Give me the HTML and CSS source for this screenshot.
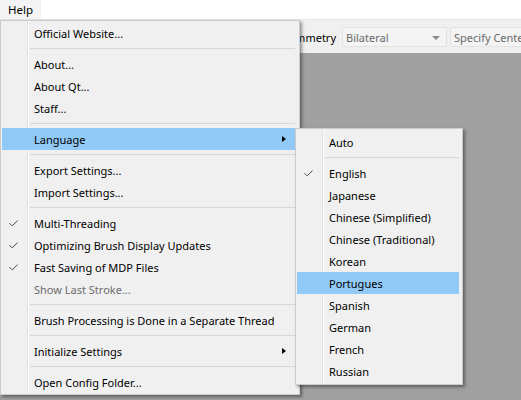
FILE: index.html
```html
<!DOCTYPE html>
<html>
<head>
<meta charset="utf-8">
<link rel="stylesheet" href="styles.css">
</head>
<body>
<div class="app">
  <div class="menubar"><span class="mb-item">Help</span></div>
  <div class="toolbar">
    <span class="tb-label">Symmetry</span>
    <div class="combo"><span>Bilateral</span><span class="combo-arrow"></span></div>
    <div class="field">Specify Center</div>
  </div>
  <div class="canvas"></div>

  <div class="menu main">
    <div class="item">Official Website...</div>
    <div class="sep"></div>
    <div class="item">About...</div>
    <div class="item">About Qt...</div>
    <div class="item">Staff...</div>
    <div class="sep"></div>
    <div class="item active">Language<span class="arrow"></span></div>
    <div class="sep"></div>
    <div class="item">Export Settings...</div>
    <div class="item">Import Settings...</div>
    <div class="sep"></div>
    <div class="item"><svg class="check" width="9" height="7" viewBox="0 0 9 7"><path d="M0.5 3.2 L3.2 5.9 L8.5 0.6" fill="none" stroke="#4a4a4a" stroke-width="1"/></svg>Multi-Threading</div>
    <div class="item"><svg class="check" width="9" height="7" viewBox="0 0 9 7"><path d="M0.5 3.2 L3.2 5.9 L8.5 0.6" fill="none" stroke="#4a4a4a" stroke-width="1"/></svg>Optimizing Brush Display Updates</div>
    <div class="item"><svg class="check" width="9" height="7" viewBox="0 0 9 7"><path d="M0.5 3.2 L3.2 5.9 L8.5 0.6" fill="none" stroke="#4a4a4a" stroke-width="1"/></svg>Fast Saving of MDP Files</div>
    <div class="item disabled">Show Last Stroke...</div>
    <div class="sep"></div>
    <div class="item">Brush Processing is Done in a Separate Thread</div>
    <div class="sep"></div>
    <div class="item">Initialize Settings<span class="arrow"></span></div>
    <div class="sep"></div>
    <div class="item">Open Config Folder...</div>
  </div>

  <div class="menu sub">
    <div class="item">Auto</div>
    <div class="sep"></div>
    <div class="item"><svg class="check" width="9" height="7" viewBox="0 0 9 7"><path d="M0.5 3.2 L3.2 5.9 L8.5 0.6" fill="none" stroke="#4a4a4a" stroke-width="1"/></svg>English</div>
    <div class="item">Japanese</div>
    <div class="item">Chinese (Simplified)</div>
    <div class="item">Chinese (Traditional)</div>
    <div class="item">Korean</div>
    <div class="item active">Portugues</div>
    <div class="item">Spanish</div>
    <div class="item">German</div>
    <div class="item">French</div>
    <div class="item">Russian</div>
  </div>
</div>
</body>
</html>
```

FILE: styles.css
```css
* { box-sizing: border-box; margin: 0; padding: 0; }
html, body { margin: 0; width: 521px; height: 400px; overflow: hidden; }
body { font-family: "Noto Sans", "Open Sans", sans-serif; font-size: 11px; color: #000; }

.app {
  position: relative;
  width: 521px;
  height: 400px;
  display: flex;
  flex-direction: column;
  background: #a0a0a0;
  overflow: hidden;
}

.menubar {
  height: 20px;
  background: #ffffff;
  border-bottom: 1px solid #e6e6e6;
  display: flex;
}
.mb-item {
  padding: 1px 8px 0 8px;
  line-height: 18px;
  font-size: 11.5px;
  background: #f4f4f4;
}

.toolbar {
  height: 33px;
  background: #f0f0f0;
  display: flex;
  align-items: flex-start;
  padding-top: 7px;
  white-space: nowrap;
}
.tb-label {
  width: 336px;
  text-align: right;
  line-height: 21px;
  flex: none;
}
.combo {
  margin-left: 6px;
  width: 105px;
  height: 20px;
  flex: none;
  background: #f4f4f4;
  border: 1px solid #e2e2e2;
  border-radius: 2px;
  display: flex;
  align-items: center;
  justify-content: space-between;
  padding: 1px 6px 0 3px;
  color: #6a6a6a;
}
.combo-arrow {
  width: 0;
  height: 0;
  border-left: 4px solid transparent;
  border-right: 4px solid transparent;
  border-top: 4px solid #8a8a8a;
}
.field {
  margin-left: 3px;
  width: 100px;
  height: 20px;
  flex: none;
  background: #f4f4f4;
  border: 1px solid #e2e2e2;
  border-radius: 2px;
  padding: 1px 0 0 3px;
  line-height: 18px;
  color: #6a6a6a;
}

.canvas { flex: 1; background: #a0a0a0; }

.menu {
  position: absolute;
  background-color: #f0f0f0;
  background-image: linear-gradient(to right, transparent 26px, #e2e2e2 26px, #e2e2e2 27px, #fbfbfb 27px, #fbfbfb 28px, transparent 28px);
  background-origin: padding-box;
  border: 1px solid #cccccc;
  box-shadow: 2px 2px 3px rgba(0, 0, 0, 0.4);
}
.menu.main {
  left: 0;
  top: 20px;
  width: 300px;
  padding: 1px 4px 1px 1px;
}
.menu.sub {
  left: 295px;
  top: 128px;
  width: 168px;
  padding: 2px 3px 2px 1px;
}

.item {
  position: relative;
  height: 22px;
  line-height: 21px;
  padding: 1px 0 0 32px;
  white-space: nowrap;
}
.item.active { background: #91c9f7; }
.item.disabled { color: #6d6d6d; }

.check {
  position: absolute;
  left: 7px;
  top: 8px;
}
.arrow {
  position: absolute;
  right: 9px;
  top: 8px;
  width: 0;
  height: 0;
  border-top: 3.5px solid transparent;
  border-bottom: 3.5px solid transparent;
  border-left: 4px solid #000;
}

.sep {
  height: 9px;
  margin-left: 28px;
  padding-top: 4px;
}
.sep::after {
  content: "";
  display: block;
  border-top: 1px solid #d7d7d7;
}
```
